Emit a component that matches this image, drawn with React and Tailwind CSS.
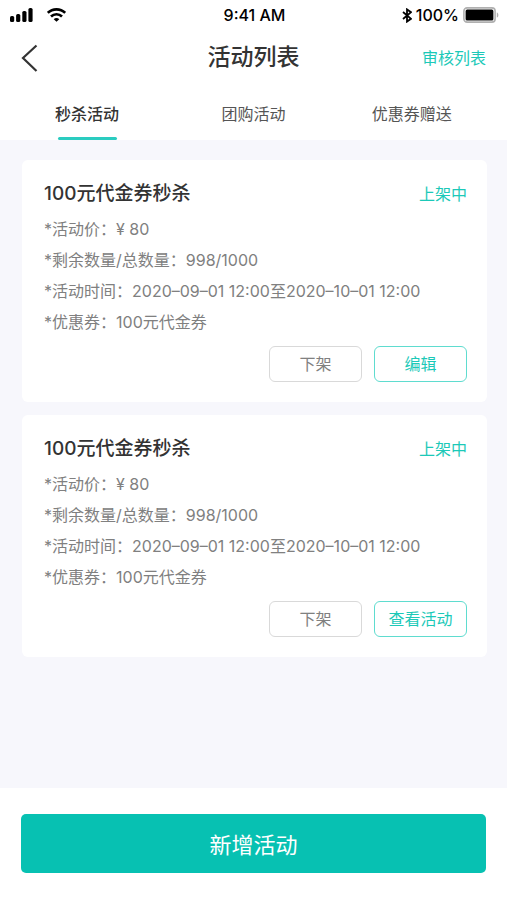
import { useState } from "react";

const tabs = ["秒杀活动", "团购活动", "优惠券赠送"];

const activities = [
  {
    id: 1,
    title: "100元代金券秒杀",
    status: "上架中",
    price: "¥ 80",
    stock: "998/1000",
    time: "2020–09–01 12:00至2020–10–01 12:00",
    coupon: "100元代金券",
    action: "编辑",
  },
  {
    id: 2,
    title: "100元代金券秒杀",
    status: "上架中",
    price: "¥ 80",
    stock: "998/1000",
    time: "2020–09–01 12:00至2020–10–01 12:00",
    coupon: "100元代金券",
    action: "查看活动",
  },
];

const StatusBar = () => (
  <div className="grid h-[30px] grid-cols-3 items-center pl-[10px] pr-2 text-base font-medium text-black">
    <div className="flex items-center gap-[14px]">
      <svg width="23" height="14" viewBox="0 0 23 14" fill="currentColor">
        <rect x="0" y="8" width="4.2" height="6" rx="1.6" />
        <rect x="6.1" y="6" width="4.2" height="8" rx="1.6" />
        <rect x="12.3" y="3" width="4.2" height="11" rx="1.6" />
        <rect x="18.4" y="0" width="4.2" height="14" rx="1.6" />
      </svg>
      <svg width="19" height="14" viewBox="0 0 19 14" fill="none" stroke="currentColor" strokeWidth="2.6">
        <path d="M0.8 4.9C5.6 0.2 13.4 0.2 18.2 4.9" />
        <path d="M4 8.5C7.1 5.4 11.9 5.4 15 8.5" />
        <path d="M9.5 13.8L6.7 11.2C8.3 9.7 10.7 9.7 12.3 11.2Z" fill="currentColor" stroke="none" />
      </svg>
    </div>
    <span className="text-center">9:41 AM</span>
    <div className="flex items-center justify-end gap-1">
      <svg width="10" height="15" viewBox="0 0 10 15" fill="none" stroke="currentColor" strokeWidth="1.8">
        <path d="M1 4L9 10.8L5 13.6V1.4L9 4.2L1 11" />
      </svg>
      <span>100%</span>
      <svg width="36" height="16" viewBox="0 0 36 16">
        <rect x="0.9" y="0.9" width="31.2" height="14.2" rx="3.2" fill="#fff" stroke="#b0b0b0" strokeWidth="1.6" />
        <rect x="2.6" y="2.6" width="27.8" height="10.8" rx="1.5" fill="#000" />
        <path d="M33.8 5.4C35.9 6 35.9 10 33.8 10.6Z" fill="#b0b0b0" />
      </svg>
    </div>
  </div>
);

const ActivityCard = ({ item }) => (
  <article className="rounded-md bg-white pb-5 pl-[22px] pr-5 pt-[18px]">
    <div className="flex h-8 items-center justify-between">
      <h2 className="text-[19px] font-medium text-[#333]">{item.title}</h2>
      <span className="text-base text-[#1cc9b8]">{item.status}</span>
    </div>
    <div className="mt-1 text-base leading-[31px] text-[#808080]">
      <p>*活动价：{item.price}</p>
      <p>*剩余数量/总数量：{item.stock}</p>
      <p>*活动时间：{item.time}</p>
      <p>*优惠券：{item.coupon}</p>
    </div>
    <div className="mt-2 flex justify-end gap-3">
      <button type="button" className="h-9 w-[93px] rounded-md border border-[#d9d9d9] text-base text-[#808080]">
        下架
      </button>
      <button type="button" className="h-9 w-[93px] rounded-md border border-[#5fdccf] text-base text-[#1cc9b8]">
        {item.action}
      </button>
    </div>
  </article>
);

const App = () => {
  const [activeTab, setActiveTab] = useState(0);

  return (
    <div className="flex min-h-screen flex-col bg-[#f7f7fc] font-['Inter','Noto_Sans_CJK_SC',sans-serif]">
      <header className="bg-white">
        <StatusBar />
        <div className="grid h-[55px] grid-cols-3 items-center px-[21px]">
          <button type="button" aria-label="返回" className="justify-self-start text-[#333]">
            <svg width="18" height="28" viewBox="0 0 18 28" fill="none" stroke="currentColor" strokeWidth="2.2">
              <path d="M15.5 1.5L2 14L15.5 27" />
            </svg>
          </button>
          <h1 className="text-center text-[23px] font-medium text-[#333]">活动列表</h1>
          <a href="#audit" className="justify-self-end text-base text-[#1cc9b8]">
            审核列表
          </a>
        </div>
        <nav className="grid h-[55px] grid-cols-[11fr_10fr_10fr] pr-4">
          {tabs.map((tab, index) => (
            <button
              key={tab}
              type="button"
              onClick={() => setActiveTab(index)}
              className={`flex flex-col items-center justify-between pt-[17px] text-base ${
                activeTab === index ? "font-medium text-[#333]" : "text-[#555]"
              }`}
            >
              {tab}
              <span className={`h-[3px] w-[59px] rounded-full ${activeTab === index ? "bg-[#2accc0]" : "bg-transparent"}`} />
            </button>
          ))}
        </nav>
      </header>

      <main className="flex flex-1 flex-col gap-[13px] py-5 pl-[22px] pr-5">
        {activities.map((item) => (
          <ActivityCard key={item.id} item={item} />
        ))}
      </main>

      <footer className="bg-white px-[21px] pb-[27px] pt-[26px]">
        <button type="button" className="h-[59px] w-full rounded-[5px] bg-[#07c1b2] pt-1 text-[22px] text-white">
          新增活动
        </button>
      </footer>
    </div>
  );
};

export default App;
